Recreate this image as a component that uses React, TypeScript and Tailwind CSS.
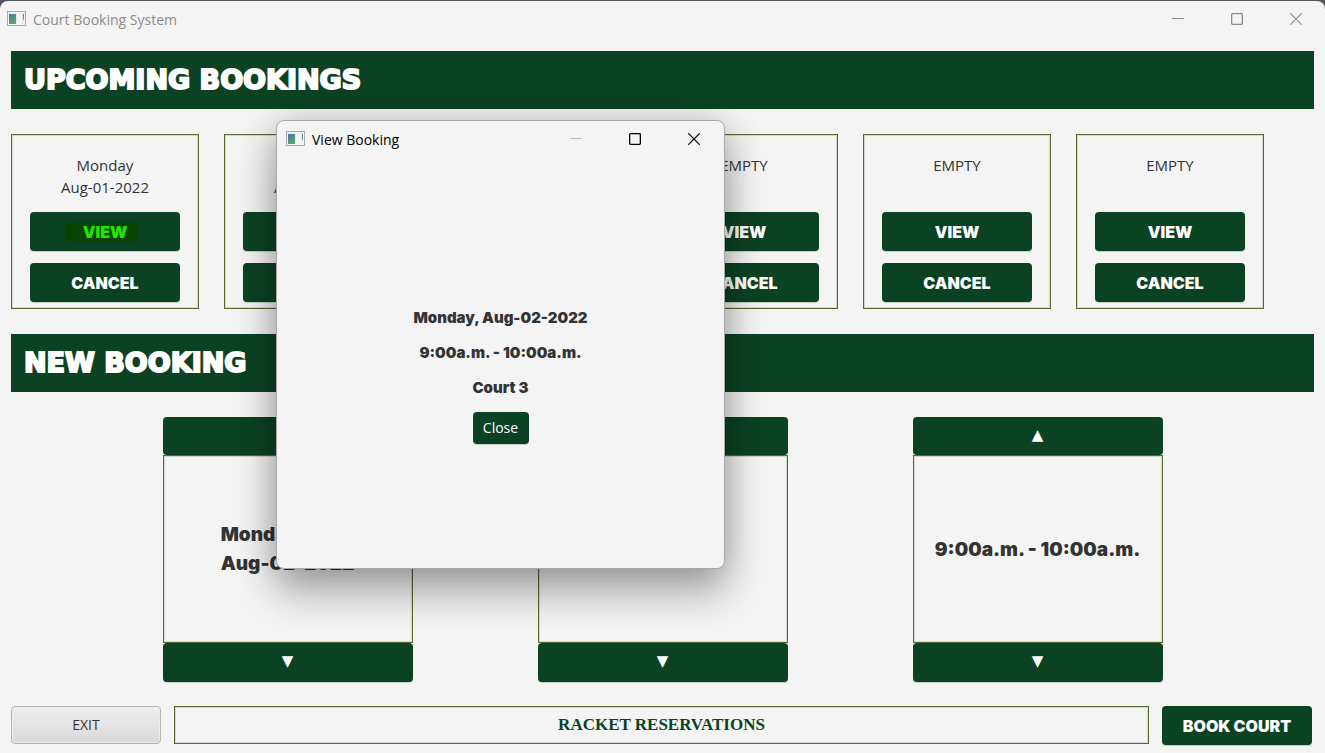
import type { ReactNode } from "react";

const heavy = "font-['Inter',sans-serif] font-black";
const greenButton =
  "flex items-center justify-center rounded bg-[#0c4224] text-white shadow-[0_1px_0_#c3cec7]";
const panel = "border border-[#556b2f] shadow-[inset_0_0_0_1px_#d3d8cd]";

function AppIcon() {
  return (
    <svg width="19" height="16" viewBox="0 0 19 16" aria-hidden="true" className="shrink-0">
      <defs>
        <linearGradient id="pane" x1="0" y1="0" x2="0.6" y2="1">
          <stop offset="0" stopColor="#4a78a8" />
          <stop offset="1" stopColor="#5aa66c" />
        </linearGradient>
        <linearGradient id="edge" x1="0" y1="0" x2="0" y2="1">
          <stop offset="0" stopColor="#4a78a8" />
          <stop offset="1" stopColor="#7db391" />
        </linearGradient>
      </defs>
      <rect x="0.5" y="0.5" width="18" height="14" fill="#f4f5f6" stroke="#a3abb1" />
      <rect x="2" y="2" width="15" height="11" fill="#e6eaec" />
      <rect x="2" y="3" width="7" height="10" fill="url(#pane)" />
      <rect x="10" y="3" width="5" height="10" fill="#f5f5f5" />
      <rect x="16" y="3" width="1" height="6" fill="url(#edge)" />
    </svg>
  );
}

function WindowControls({ color, minimizeColor }: { color: string; minimizeColor: string }) {
  return (
    <div className="flex gap-[35px]">
      <button type="button" aria-label="Minimize" className="flex size-6 items-center justify-center">
        <svg width="12" height="12" viewBox="0 0 12 12" stroke={minimizeColor}>
          <path d="M0 5.5H12" />
        </svg>
      </button>
      <button type="button" aria-label="Maximize" className="flex size-6 items-center justify-center">
        <svg width="12" height="12" viewBox="0 0 12 12" fill="none" stroke={color} strokeWidth="1.3">
          <rect x="0.65" y="0.65" width="10.7" height="10.7" rx="0.8" />
        </svg>
      </button>
      <button type="button" aria-label="Close window" className="flex size-6 items-center justify-center">
        <svg width="12" height="12" viewBox="0 0 12 12" fill="none" stroke={color} strokeWidth="1.2">
          <path d="M0.3 0.3L11.7 11.7M11.7 0.3L0.3 11.7" />
        </svg>
      </button>
    </div>
  );
}

function Banner({ children }: { children: ReactNode }) {
  return (
    <h2 className="flex h-[58px] shrink-0 items-center bg-[#0c4224] px-[13px] font-['DejaVu_Sans',sans-serif] text-[27px] font-bold text-white [-webkit-text-stroke:2px_white]">
      {children}
    </h2>
  );
}

function BookingCard({ lines, active }: { lines: string[]; active?: boolean }) {
  return (
    <article className={`${panel} flex w-[188px] flex-col items-center pt-[19px] pb-[6px]`}>
      <div className="h-11 text-center text-[15px] leading-[22px]">
        {lines.map((line) => (
          <p key={line}>{line}</p>
        ))}
      </div>
      <button type="button" className={`${greenButton} ${heavy} mt-[14px] h-[39px] w-[150px] text-base`}>
        {active ? (
          <span className="mr-[7px] w-[73px] bg-[#0a4300] pl-[7px] text-center leading-[18px] text-[#22e600]">
            VIEW
          </span>
        ) : (
          "VIEW"
        )}
      </button>
      <button type="button" className={`${greenButton} ${heavy} mt-3 h-[39px] w-[150px] text-base`}>
        CANCEL
      </button>
    </article>
  );
}

function Spinner({ label, children }: { label: string; children: ReactNode }) {
  const arrow = `${greenButton} w-full pb-[2px] font-['DejaVu_Sans',sans-serif] text-[15px]`;
  return (
    <div className="flex w-[250px] flex-col">
      <button type="button" aria-label={`Previous ${label}`} className={`${arrow} h-[38px]`}>
        ▲
      </button>
      <div className={`${panel} ${heavy} flex flex-1 items-center justify-center text-[19px] leading-[29px]`}>
        {children}
      </div>
      <button type="button" aria-label={`Next ${label}`} className={`${arrow} h-[39px]`}>
        ▼
      </button>
    </div>
  );
}

const bookings = [
  { id: 1, lines: ["Monday", "Aug-01-2022"], active: true },
  { id: 2, lines: ["Monday", "Aug-02-2022"] },
  { id: 3, lines: ["EMPTY"] },
  { id: 4, lines: ["EMPTY"] },
  { id: 5, lines: ["EMPTY"] },
  { id: 6, lines: ["EMPTY"] },
];

function ViewBookingDialog() {
  return (
    <div
      role="dialog"
      aria-labelledby="dialog-title"
      className="absolute top-[120px] left-[276px] flex h-[449px] w-[449px] flex-col rounded-lg border border-[#a8a8a8] bg-[#f4f4f4] shadow-[0_24px_40px_rgba(0,0,0,0.3),0_0_36px_rgba(0,0,0,0.18)]"
    >
      <header className="flex h-9 shrink-0 items-center justify-between pr-[18px] pl-[9px] text-black">
        <div className="flex items-center gap-[7px]">
          <AppIcon />
          <h1 id="dialog-title" className="pt-px text-sm">View Booking</h1>
        </div>
        <WindowControls color="#000000" minimizeColor="#bdbdbd" />
      </header>
      <div className={`${heavy} flex flex-1 flex-col items-center justify-center gap-[13px] pt-[26px] text-[15px] leading-[22px]`}>
        <p>Monday, Aug-02-2022</p>
        <p>9:00a.m. - 10:00a.m.</p>
        <p>Court 3</p>
        <button type="button" className={`${greenButton} h-8 w-14 font-['Open_Sans',sans-serif] text-sm font-normal`}>
          Close
        </button>
      </div>
    </div>
  );
}

export default function App() {
  return (
    <div className="relative flex min-h-screen flex-col bg-[#56535a] pt-px font-['Open_Sans',sans-serif] text-[#333333]">
      <div className="flex flex-1 flex-col rounded-t-lg bg-[#f4f4f4] pb-2">
        <header className="flex h-9 shrink-0 items-center justify-between pr-[17px] pl-[7px] text-[#8c8c8c]">
          <div className="flex items-center gap-[7px]">
            <AppIcon />
            <h1 className="pt-px text-sm">Court Booking System</h1>
          </div>
          <WindowControls color="#8c8c8c" minimizeColor="#8c8c8c" />
        </header>

        <main className="flex flex-1 flex-col px-[11px] pt-[14px]">
          <Banner>UPCOMING BOOKINGS</Banner>
          <section className="my-[25px] flex gap-[25px]">
            {bookings.map((b) => (
              <BookingCard key={b.id} lines={b.lines} active={b.active} />
            ))}
          </section>
          <Banner>NEW BOOKING</Banner>
          <section className="mt-[25px] mb-6 flex min-h-[265px] flex-1 justify-center gap-[125px]">
            <Spinner label="date">
              <p>
                Monday
                <br />
                Aug-02-2022
              </p>
            </Spinner>
            <Spinner label="court">Court 3</Spinner>
            <Spinner label="time">9:00a.m. - 10:00a.m.</Spinner>
          </section>
          <footer className="flex items-start gap-[13px] pr-[2px]">
            <button
              type="button"
              className="h-[38px] w-[150px] rounded border border-[#b5b5b5] bg-linear-to-b from-[#efefef] to-[#d9d9d9] text-sm shadow-[inset_0_0_0_1px_#ececec]"
            >
              EXIT
            </button>
            <p className={`${panel} flex h-[38px] flex-1 items-center justify-center font-['Liberation_Serif',serif] text-[17px] font-bold text-[#0c4224]`}>
              RACKET RESERVATIONS
            </p>
            <button type="button" className={`${greenButton} ${heavy} h-[39px] w-[150px] text-base`}>
              BOOK COURT
            </button>
          </footer>
        </main>
      </div>
      <ViewBookingDialog />
    </div>
  );
}
